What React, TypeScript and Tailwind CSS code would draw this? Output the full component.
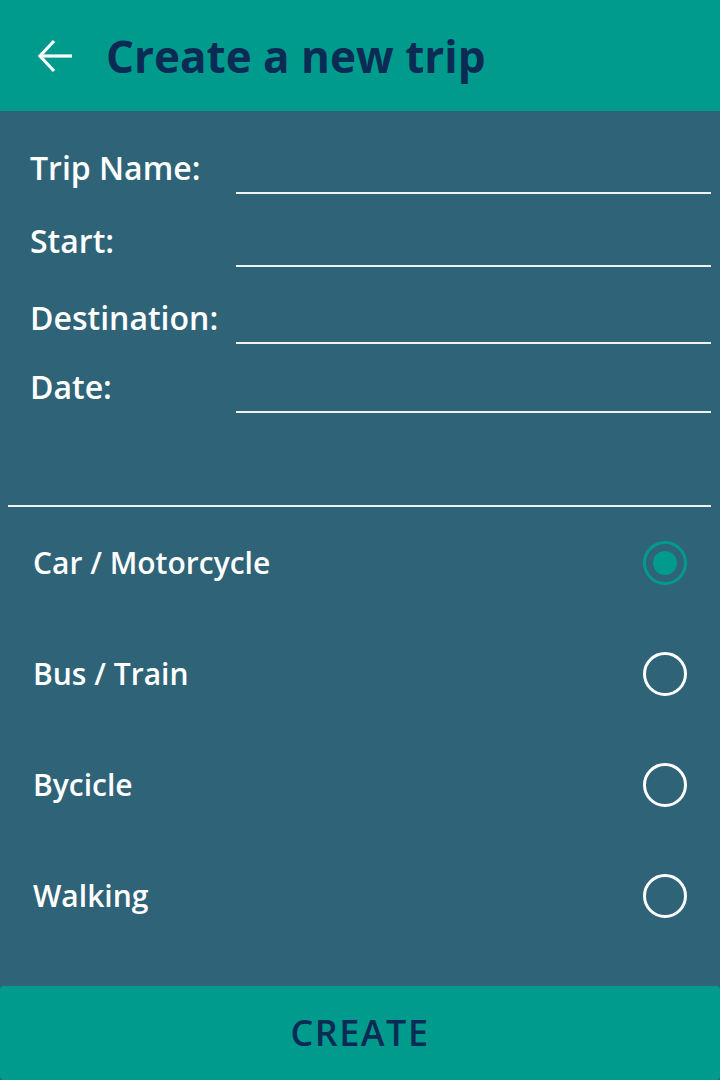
const fields = [
  { label: 'Trip Name:', h: 'h-[83px]' },
  { label: 'Start:', h: 'h-[73px]' },
  { label: 'Destination:', h: 'h-[77px]' },
  { label: 'Date:', h: 'h-[69px]' },
];

const modes = ['Car / Motorcycle', 'Bus / Train', 'Bycicle', 'Walking'];

function Radio({ checked }: { checked: boolean }) {
  if (checked) {
    return (
      <div className="w-[44px] h-[44px] rounded-full border-[3px] border-[#009b8c] flex items-center justify-center">
        <div className="w-[24px] h-[24px] rounded-full bg-[#009b8c]" />
      </div>
    );
  }
  return <div className="w-[44px] h-[44px] rounded-full border-[3px] border-white" />;
}

export default function App() {
  return (
    <div
      className="w-[720px] h-[1080px] bg-[#2f6378] flex flex-col"
      style={{ fontFamily: '"Open Sans", Lato, sans-serif' }}
    >
      <header className="h-[111px] bg-[#009b8c] flex items-center">
        <svg width="40" height="40" viewBox="0 0 40 40" className="ml-[35px]" fill="none" stroke="white" strokeWidth="3.2">
          <path d="M37 20 H6" />
          <path d="M19 5 L5 20 L19 35" />
        </svg>
        <h1 className="ml-[31px] text-[44px] font-bold text-[#0b2b55]">Create a new trip</h1>
      </header>

      <div>
        {fields.map((f) => (
          <div key={f.label} className={`${f.h} flex items-end pl-[30px] pr-[9px]`}>
            <label className="w-[206px] shrink-0 text-[32px] leading-[40px] pb-[6px] font-semibold text-white whitespace-nowrap">
              {f.label}
            </label>
            <div className="flex-1 h-[40px] border-b-2 border-[#f2f2f2]" />
          </div>
        ))}
      </div>

      <div className="mt-[92px] ml-[8px] mr-[9px] h-[2px] bg-[#f2f2f2]" />

      <div>
        {modes.map((m, i) => (
          <div key={m} className="h-[111px] flex items-center justify-between pl-[33px] pr-[33px]">
            <span className="text-[30px] font-semibold text-white">{m}</span>
            <Radio checked={i === 0} />
          </div>
        ))}
      </div>

      <button className="mt-auto h-[94px] w-full bg-[#009b8c] rounded-[4px] text-[36px] font-semibold tracking-[1.5px] text-[#0b2b55]">
        CREATE
      </button>
    </div>
  );
}
